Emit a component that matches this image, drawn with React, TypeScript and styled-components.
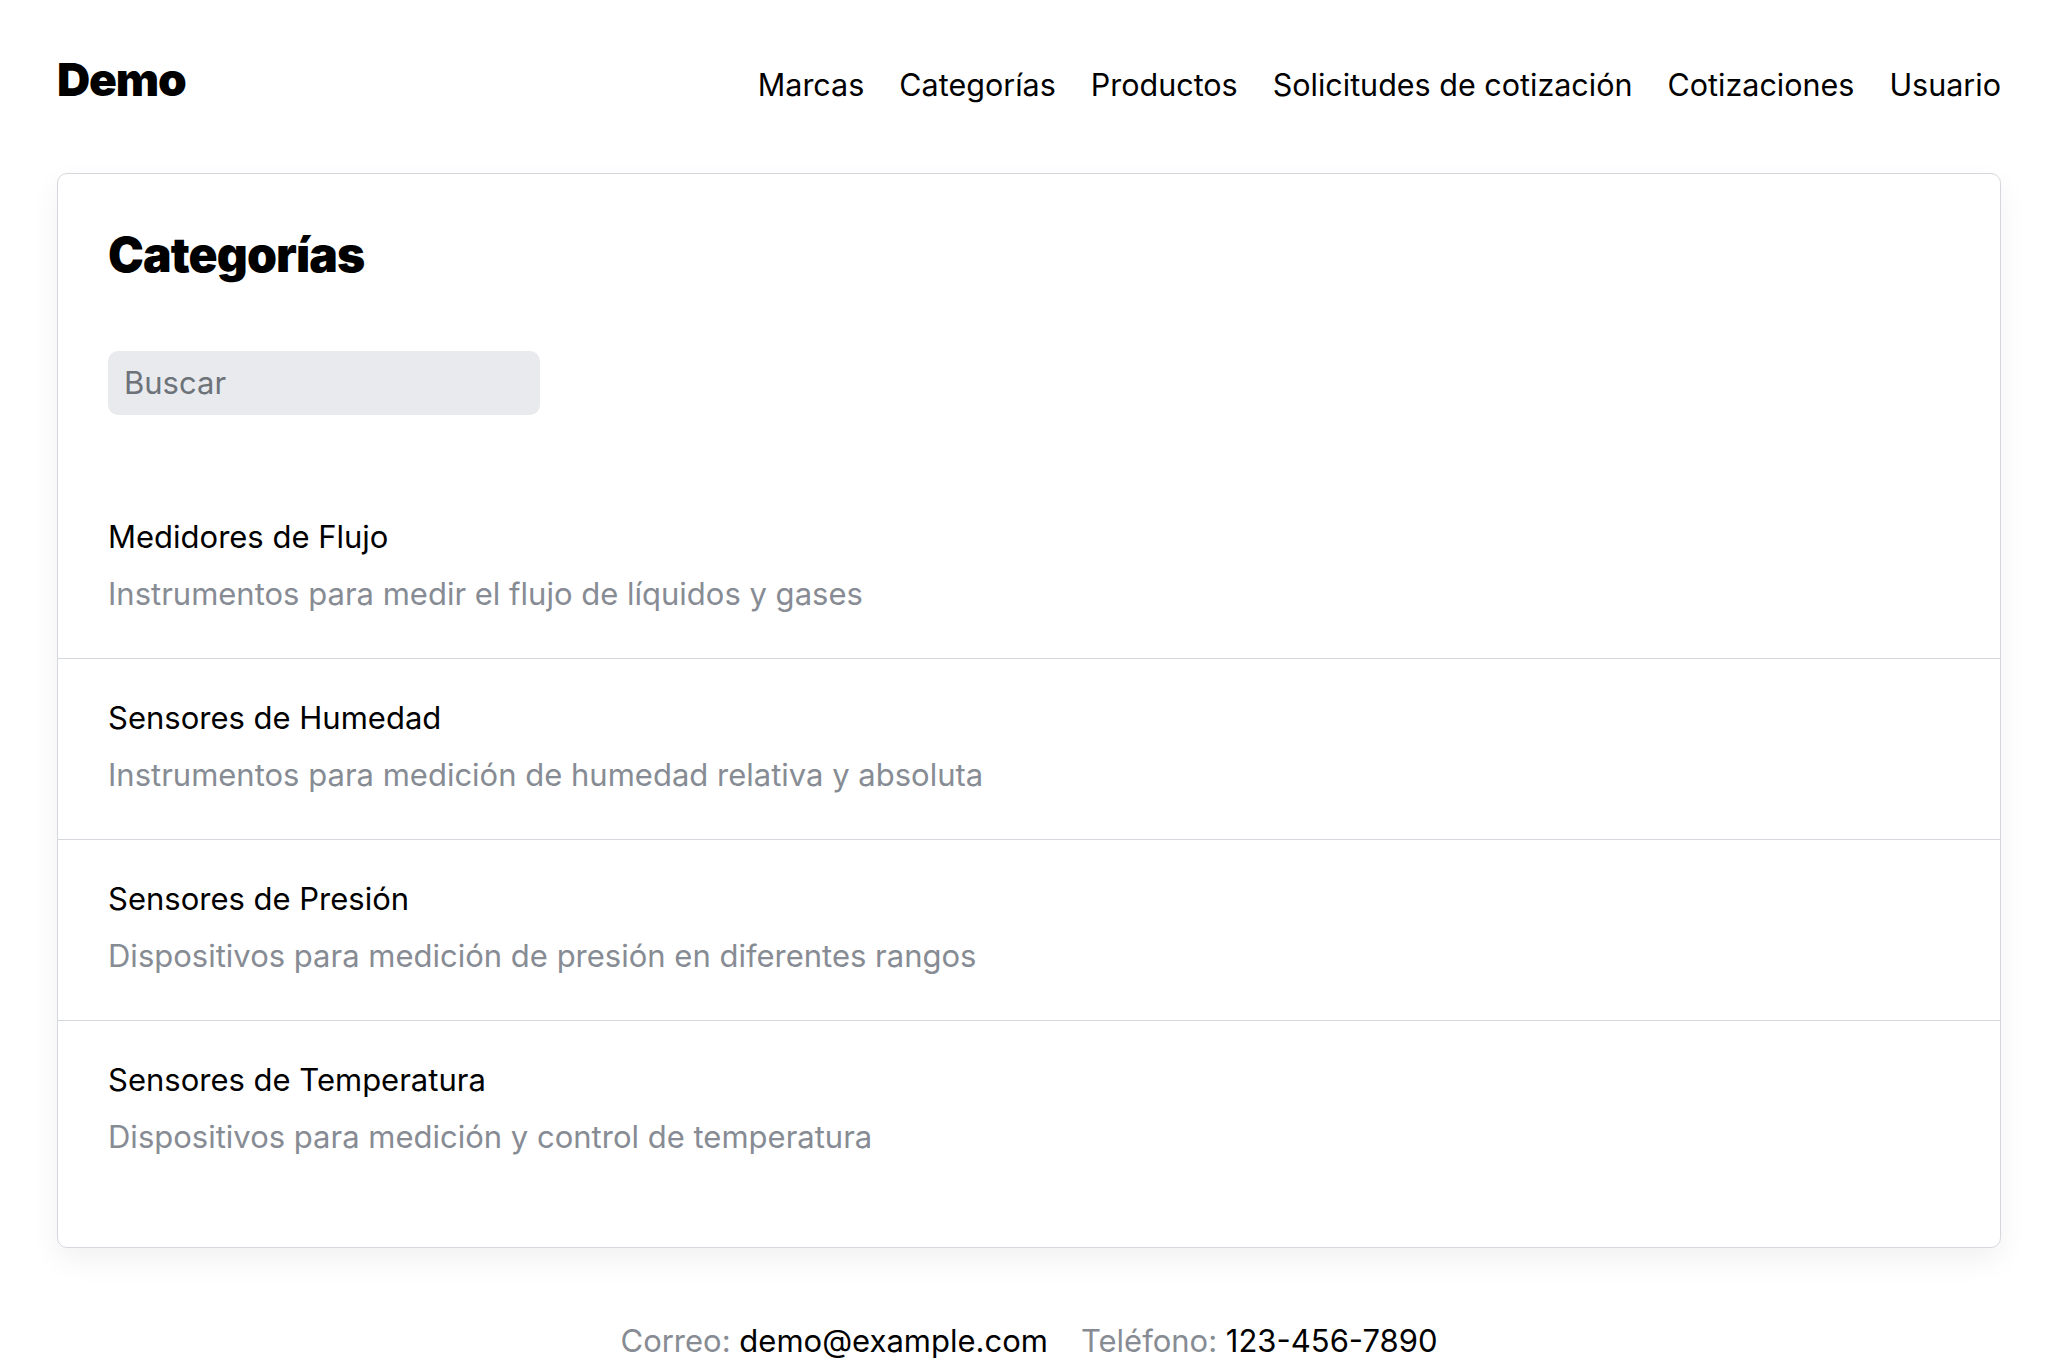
import React from 'react';
import styled, { createGlobalStyle } from 'styled-components';

const GlobalStyle = createGlobalStyle`
  html, body {
    margin: 0;
    padding: 0;
    background: #ffffff;
  }
  body {
    font-family: Inter, "Noto Sans", "Liberation Sans", sans-serif;
    color: #000000;
  }
  * {
    box-sizing: border-box;
  }
`;

const Page = styled.div`
  padding: 52px 57px 0;
`;

const Header = styled.header`
  display: flex;
  justify-content: space-between;
  align-items: baseline;
`;

const Brand = styled.div`
  font-size: 46px;
  font-weight: 900;
  line-height: 1.2;
  letter-spacing: -1.2px;
`;

const Nav = styled.nav`
  display: flex;
  gap: 35px;
`;

const NavLink = styled.a`
  font-size: 30.5px;
  line-height: 1.2;
  color: #000;
  text-decoration: none;
  cursor: pointer;
`;

const Card = styled.section`
  margin-top: 66px;
  border: 1.5px solid #d4d7dc;
  border-radius: 10px;
  box-shadow: 0 12px 30px rgba(0, 0, 0, 0.06);
  padding: 52px 0 46px;
`;

const Title = styled.h1`
  margin: 0;
  padding: 0 50px;
  font-size: 48px;
  font-weight: 900;
  line-height: 1.2;
  letter-spacing: -0.9px;
`;

const SearchRow = styled.div`
  padding: 0 50px;
  margin-top: 67px;
`;

const SearchInput = styled.input`
  width: 432px;
  height: 64px;
  border: none;
  outline: none;
  border-radius: 10px;
  background: #e9eaee;
  padding: 0 16px;
  font-family: inherit;
  font-size: 31px;
  color: #000;

  &::placeholder {
    color: #6e737a;
  }
`;

const List = styled.ul`
  list-style: none;
  margin: 63px 0 0;
  padding: 0;
`;

const Item = styled.li<{ $last?: boolean }>`
  padding: 37px 50px 42px;
  border-bottom: ${({ $last }) => ($last ? 'none' : '1px solid #d4d7dc')};
`;

const ItemName = styled.div`
  font-size: 31px;
  line-height: 44px;
  color: #000;
`;

const ItemDesc = styled.div`
  margin-top: 13px;
  font-size: 31px;
  line-height: 44px;
  color: #878c94;
`;

const Footer = styled.footer`
  margin-top: 71px;
  display: flex;
  justify-content: center;
  gap: 33px;
  font-size: 31px;
  line-height: 44px;
`;

const Label = styled.span`
  color: #878c94;
`;

const categories = [
  { name: 'Medidores de Flujo', desc: 'Instrumentos para medir el flujo de líquidos y gases' },
  { name: 'Sensores de Humedad', desc: 'Instrumentos para medición de humedad relativa y absoluta' },
  { name: 'Sensores de Presión', desc: 'Dispositivos para medición de presión en diferentes rangos' },
  { name: 'Sensores de Temperatura', desc: 'Dispositivos para medición y control de temperatura' },
];

const navItems = ['Marcas', 'Categorías', 'Productos', 'Solicitudes de cotización', 'Cotizaciones', 'Usuario'];

const App = () => {
  return (
    <Page>
      <GlobalStyle />
      <Header>
        <Brand>Demo</Brand>
        <Nav>
          {navItems.map((item) => (
            <NavLink key={item}>{item}</NavLink>
          ))}
        </Nav>
      </Header>
      <Card>
        <Title>Categorías</Title>
        <SearchRow>
          <SearchInput placeholder="Buscar" />
        </SearchRow>
        <List>
          {categories.map((c, i) => (
            <Item key={c.name} $last={i === categories.length - 1}>
              <ItemName>{c.name}</ItemName>
              <ItemDesc>{c.desc}</ItemDesc>
            </Item>
          ))}
        </List>
      </Card>
      <Footer>
        <span>
          <Label>Correo:</Label> demo@example.com
        </span>
        <span>
          <Label>Teléfono:</Label> 123-456-7890
        </span>
      </Footer>
    </Page>
  );
};

export default App;
